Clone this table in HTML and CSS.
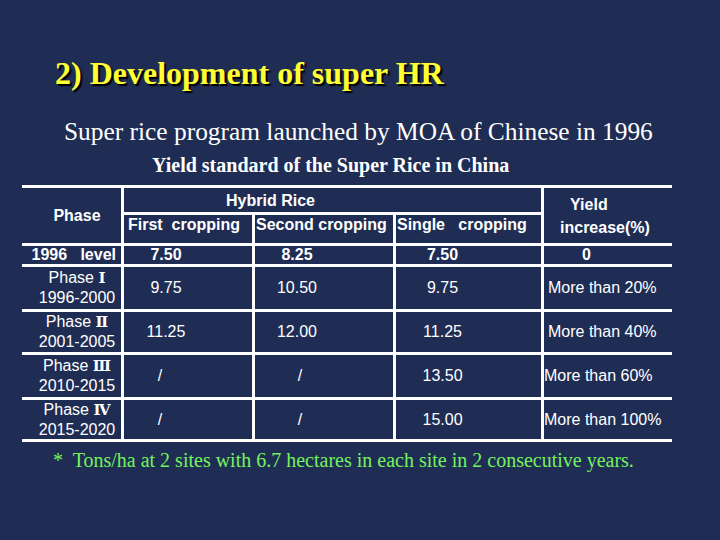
FILE: index.html
```html
<!DOCTYPE html>
<html>
<head>
<meta charset="utf-8">
<link rel="stylesheet" href="styles.css">
</head>
<body>
<div class="slide">
  <h1 class="title">2) Development of super HR</h1>
  <p class="subtitle">Super rice program launched by MOA of Chinese in 1996</p>
  <p class="caption">Yield standard of the Super Rice in China</p>
  <table class="yield">
    <colgroup>
      <col class="c1"><col class="c2"><col class="c3"><col class="c4"><col class="c5">
    </colgroup>
    <thead>
      <tr class="ha">
        <th rowspan="2" class="phase-h">Phase</th>
        <th colspan="3" class="hybrid">Hybrid Rice</th>
        <th rowspan="2" class="yield-h"><span class="y1">Yield</span><span class="y2">increase(%)</span></th>
      </tr>
      <tr class="hb">
        <th class="sub first">First&nbsp; cropping</th>
        <th class="sub">Second cropping</th>
        <th class="sub">Single&nbsp;&nbsp; cropping</th>
      </tr>
    </thead>
    <tbody>
      <tr class="r1 base">
        <td class="ph">1996&nbsp;&nbsp; level</td>
        <td class="v2">7.50</td>
        <td class="v3">8.25</td>
        <td class="v4">7.50</td>
        <td class="v5 zero">0</td>
      </tr>
      <tr class="r2">
        <td class="ph">Phase <span class="rn">Ⅰ</span><br>1996-2000</td>
        <td class="v2">9.75</td>
        <td class="v3">10.50</td>
        <td class="v4">9.75</td>
        <td class="v5">More than 20%</td>
      </tr>
      <tr class="r3">
        <td class="ph">Phase <span class="rn">Ⅱ</span><br>2001-2005</td>
        <td class="v2">11.25</td>
        <td class="v3">12.00</td>
        <td class="v4">11.25</td>
        <td class="v5">More than 40%</td>
      </tr>
      <tr class="r4">
        <td class="ph">Phase <span class="rn">Ⅲ</span><br>2010-2015</td>
        <td class="v2 slash">/</td>
        <td class="v3 slash">/</td>
        <td class="v4">13.50</td>
        <td class="v5 tight">More than 60%</td>
      </tr>
      <tr class="r5">
        <td class="ph">Phase <span class="rn">Ⅳ</span><br>2015-2020</td>
        <td class="v2 slash">/</td>
        <td class="v3 slash">/</td>
        <td class="v4">15.00</td>
        <td class="v5 tight">More than 100%</td>
      </tr>
    </tbody>
  </table>
  <p class="note">*&nbsp; Tons/ha at 2 sites with 6.7 hectares in each site in 2 consecutive years.</p>
</div>
</body>
</html>
```

FILE: styles.css
```css
* { box-sizing: border-box; }
html, body { margin: 0; padding: 0; }
body { background: #1f2d54; }
.slide {
  width: 720px;
  height: 540px;
  background: #1f2d54;
  overflow: hidden;
  font-family: "Liberation Serif", "Times New Roman", serif;
}
.title {
  margin: 0;
  padding: 55px 0 0 55px;
  font-size: 32px;
  line-height: 36px;
  font-weight: bold;
  color: #ffff33;
  text-shadow: 2px 2px 1px #000000;
}
.subtitle {
  margin: 0;
  padding: 25px 0 0 64px;
  font-size: 25.4px;
  line-height: 30px;
  color: #ffffff;
}
.caption {
  margin: 0;
  padding: 8px 0 0 152px;
  font-size: 20px;
  line-height: 22px;
  font-weight: bold;
  color: #ffffff;
}
.yield {
  margin: 9px 0 0 22px;
  width: 650px;
  table-layout: fixed;
  border-collapse: separate;
  border-spacing: 0;
  border-top: 3px solid #ffffff;
  font-family: "Liberation Sans", Arial, sans-serif;
  font-size: 16px;
  color: #ffffff;
}
.c1 { width: 99px; }
.c2 { width: 131px; }
.c3 { width: 141px; }
.c4 { width: 148px; }
.c5 { width: 131px; }
.yield th, .yield td {
  padding: 0;
  border-bottom: 3px solid #ffffff;
  border-left: 3px solid #ffffff;
  vertical-align: middle;
  white-space: nowrap;
}
.yield th { font-weight: bold; line-height: 19px; }
.yield td { line-height: 20px; font-weight: normal; }
.yield .phase-h, .yield .ph { border-left: none; }
.ha { height: 27px; }
.hb { height: 31px; }
.yield .phase-h { text-align: center; padding-left: 11px; }
.yield .hybrid { text-align: center; padding-right: 124px; }
.yield .yield-h { text-align: left; padding-left: 16px; line-height: 23px; }
.y1 { display: block; padding-left: 10px; }
.y2 { display: block; }
.yield .sub { text-align: left; vertical-align: top; padding: 0 0 0 1px; }
.yield .sub.first { padding-left: 4px; }

.yield .r1 td { line-height: 18px; font-weight: bold; }
.yield .r5 td { line-height: 19px; }
.r1 { height: 21px; }
.r2 { height: 45px; }
.r3 { height: 43px; }
.r4 { height: 45px; }
.r5 { height: 41px; }
.yield .ph { text-align: center; padding-left: 11px; }
.yield .base .ph { text-align: right; padding: 0 5px 0 0; }
.rn {
  font-family: "DejaVu Serif", "Liberation Serif", serif;
  font-weight: bold;
  font-size: 15px;
}
.yield .v2 { text-align: center; padding-right: 44px; }
.yield .v3 { text-align: center; padding-right: 54px; }
.yield .v4 { text-align: center; padding-right: 52px; }
.yield .v2.slash { padding-right: 56px; }
.yield .v3.slash { padding-right: 48px; }
.yield .v5 { text-align: left; padding-left: 4px; }
.yield .v5.zero { padding-left: 38px; }
.yield .v5.tight { padding-left: 0; }
.note {
  margin: 0;
  padding: 6px 0 0 53px;
  font-size: 20px;
  line-height: 24px;
  color: #74f25e;
}
```
